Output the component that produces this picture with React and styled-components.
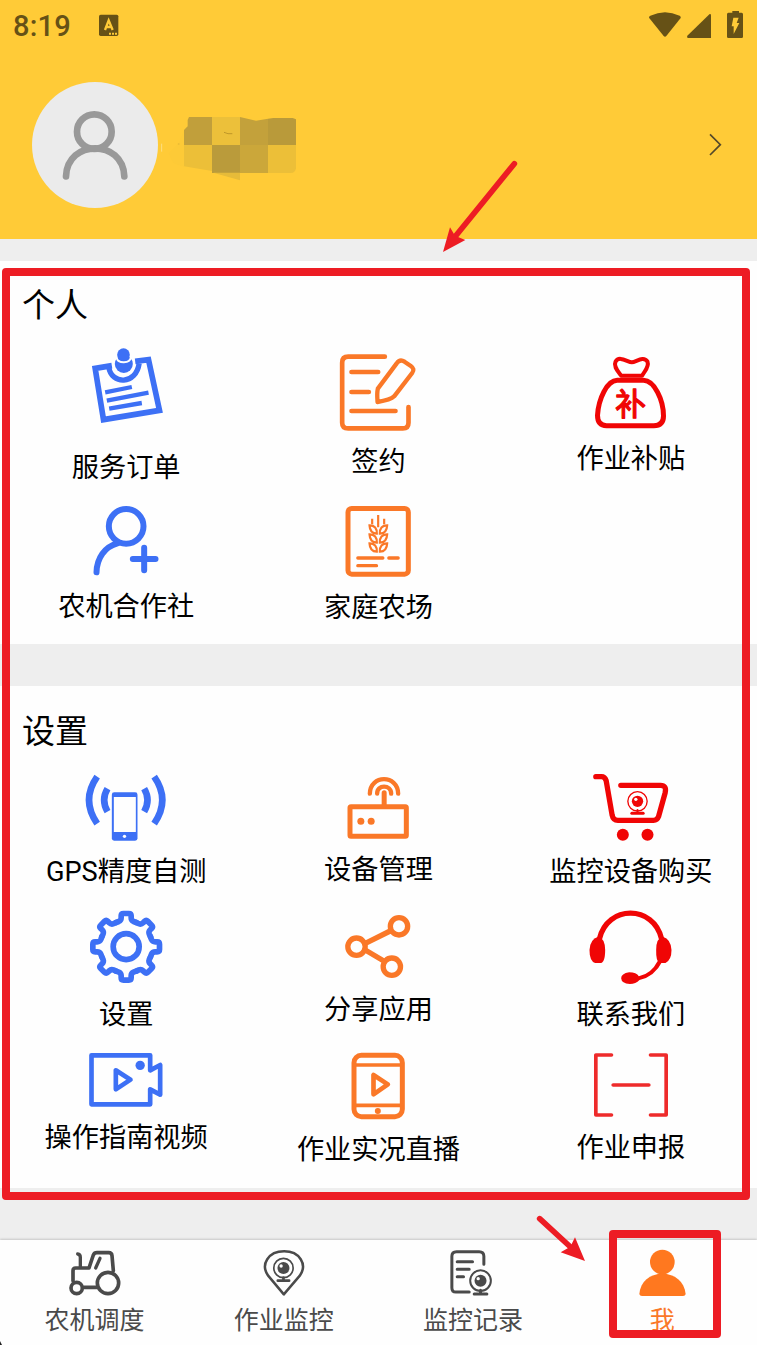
import React from "react";
import styled, { createGlobalStyle } from "styled-components";

const BLUE = "#3d70f5";
const ORANGE = "#fa7828";
const RED = "#f00505";
const MARK = "#ed1c24";
const GREY = "#4a4a4a";

const GlobalStyle = createGlobalStyle`
  body {
    margin: 0;
    background: #eeeeee;
    font-family: Roboto, "Noto Sans CJK SC", sans-serif;
  }
`;

const Page = styled.div`
  position: relative;
  display: flex;
  flex-direction: column;
  width: 757px;
  height: 1345px;
  overflow: hidden;
  background: #eeeeee;
`;

const Header = styled.header`
  height: 239px;
  background: #ffcb37;
`;

const StatusBar = styled.div`
  display: flex;
  align-items: center;
  height: 52px;
  padding: 0 12px 0 13px;
`;

const Time = styled.span`
  width: 85px;
  font-size: 29px;
  font-weight: 500;
  line-height: 52px;
  letter-spacing: 0.2px;
  color: #665116;
`;

const StatusIcons = styled.svg`
  margin-left: auto;
`;

const Profile = styled.div`
  display: flex;
  align-items: center;
  height: 186px;
  padding: 0 27px 0 32px;
`;

const Avatar = styled.div`
  width: 126px;
  height: 126px;
  border-radius: 50%;
  background: #ebebeb;
`;

const Chevron = styled.svg`
  margin-left: auto;
`;

const Section = styled.section`
  height: ${(props) => props.$height}px;
  margin-top: ${(props) => props.$gap}px;
  background: #fefefe;
`;

const Title = styled.h2`
  margin: 0;
  padding: ${(props) => props.$top}px 0 0 22px;
  height: ${(props) => props.$height}px;
  box-sizing: border-box;
  font-size: 33px;
  font-weight: 400;
  line-height: 48px;
  color: #000;
`;

const Grid = styled.div`
  display: grid;
  grid-template-columns: repeat(3, 1fr);
  grid-template-rows: ${(props) => props.$rows};
`;

const Tile = styled.div`
  display: flex;
  flex-direction: column;
  align-items: center;
`;

const Drawing = styled.svg`
  display: block;
  flex: none;
  fill: none;
  stroke-linecap: round;
  stroke-linejoin: round;
`;

const Label = styled.span`
  padding-top: 1px;
  font-size: 27.2px;
  line-height: 36px;
  white-space: nowrap;
  color: #000;
`;

const TabBar = styled.nav`
  display: grid;
  grid-template-columns: repeat(4, 1fr);
  height: 105px;
  margin-top: auto;
  background: #fefefe;
  box-shadow: 0 -1px 2px rgba(0, 0, 0, 0.16);
`;

const Tab = styled.div`
  display: flex;
  flex-direction: column;
  align-items: center;
  padding-top: 6px;
  font-size: 25px;
  line-height: 42px;
  white-space: nowrap;
  color: ${(props) => (props.$active ? ORANGE : GREY)};
`;

const Frame = styled.div`
  position: absolute;
  left: ${(props) => props.$x}px;
  top: ${(props) => props.$y}px;
  width: ${(props) => props.$w}px;
  height: ${(props) => props.$h}px;
  box-sizing: border-box;
  border: 8px solid ${MARK};
  border-radius: 4px;
`;

const Arrow = styled.svg`
  position: absolute;
  left: ${(props) => props.$x}px;
  top: ${(props) => props.$y}px;
`;

const Corner = styled.svg`
  position: absolute;
  left: 0;
  bottom: 0;
`;

// every drawing uses three units per pixel
const Icon = ({ x, y, h, w = 84, color, width = 14, children }) => (
  <Drawing
    width={w}
    height={h}
    viewBox={`${x} ${y} ${w * 3} ${h * 3}`}
    stroke={color}
    strokeWidth={width}
  >
    {children}
  </Drawing>
);

const OrderIcon = () => (
  <Icon x={252.5} y={240} h={109} color={BLUE} width={17}>
    <g strokeLinecap="butt" strokeLinejoin="miter">
      <path d="M336 317L286 325L311 479L479 451L446 299L406 304" />
      <path d="M327 322C335 375 409 375 418 310" strokeWidth="16" />
      <path d="M316 397L396 381M321 422L446 398M328 446L426 429" strokeWidth="13" />
    </g>
    <circle cx="372" cy="312" r="27" fill={BLUE} stroke="none" />
    <path d="M351 295C355 311 390 311 393 293" stroke="#fefefe" strokeWidth="6" />
    <circle cx="371" cy="284" r="19" fill={BLUE} stroke="none" />
  </Icon>
);

const SignIcon = () => (
  <Icon x={259.5} y={0} h={103} color={ORANGE} width={14}>
    <path d="M406 50H296Q278 50 278 68V248Q278 265 296 265H460Q477 265 477 248V201" />
    <path d="M306 96H386M306 156H358M306 213H438" />
    <path
      d="M384 184Q382 158 385 146L441 71Q451 56 465 65L484 78Q497 87 488 99L434 169Q423 180 384 186Z"
      strokeWidth="13"
    />
  </Icon>
);

const SubsidyIcon = () => (
  <Icon x={245.5} y={0} h={100} color={RED}>
    <path
      d="M342 107C333 94 318 80 325 65C336 45 362 67 374 67C386 67 409 46 421 65C427 82 411 94 405 107Z"
      strokeWidth="12"
    />
    <path
      d="M330 121H409C442 122 469 180 469 228Q469 257 440 257H298Q271 257 271 226C274 177 299 122 330 121Z"
      strokeWidth="15"
    />
    <text
      x="370"
      y="225"
      textAnchor="middle"
      fontSize="92"
      fontFamily="Noto Sans CJK SC, sans-serif"
      fill={RED}
      strokeWidth="4"
    >
      补
    </text>
  </Icon>
);

const CoopIcon = () => (
  <Icon x={252.5} y={30} h={88} color={BLUE} width={18}>
    <circle cx="379" cy="109" r="52" />
    <path d="M353 160C315 170 291 204 290 247" />
    <path d="M399 207H467M433 173V241" />
  </Icon>
);

const leaf = "M360 556Q383 556 382 581Q361 580 360 556Z";

const FarmIcon = () => (
  <Icon x={259.5} y={480} h={89} color={ORANGE} width={15}>
    <rect x="295.5" y="505.5" width="181" height="197" rx="11" />
    <g strokeLinecap="butt" strokeLinejoin="miter" strokeWidth="6.5">
      <path d="M386 525V562M368 536V553M404 536V553" />
      {[0, 27, 54].map((dy) => (
        <g key={dy} transform={`translate(0 ${dy})`}>
          <path d={leaf} />
          <path d={leaf} transform="translate(773 0) scale(-1 1)" />
        </g>
      ))}
    </g>
    <path d="M325 654H400M418 654H446M325 677H381" strokeWidth="10" />
  </Icon>
);

const GpsIcon = () => (
  <Icon x={252.5} y={30} h={83} color={BLUE} width={20}>
    <g strokeLinecap="butt">
      <path d="M292 50Q243 120 292 191M323 86Q303 120 323 155" />
      <path d="M463 50Q512 120 463 191M433 86Q453 120 433 155" />
    </g>
    <rect x="336" y="97" width="77" height="145" rx="7" fill={BLUE} stroke="none" />
    <path d="M342 111H408V216H342Z" fill="#fefefe" stroke="none" />
    <circle cx="374" cy="229" r="5" fill="#fefefe" stroke="none" />
  </Icon>
);

const RouterIcon = () => (
  <Icon x={259.5} y={30} h={81} color={ORANGE} width={15}>
    <rect x="301.5" y="140" width="169" height="89" rx="3" />
    <path d="M404 98V136" />
    <path d="M383 101C382 73 425 73 425 101" strokeWidth="13" />
    <path d="M361 101C362 43 445 43 446 101" strokeWidth="13" />
    <circle cx="334" cy="184" r="10.5" fill={ORANGE} stroke="none" />
    <circle cx="365" cy="184" r="10.5" fill={ORANGE} stroke="none" />
  </Icon>
);

const CartIcon = () => (
  <Icon x={245.5} y={30} h={83} color={RED} width={16}>
    <path d="M266 50H283Q293 50 297 62L315 166Q318 181 332 181H439Q450 181 454 170L474 98Q479 76 460 76H341" />
    <circle cx="391" cy="124" r="29" strokeWidth="4" />
    <circle cx="391" cy="124" r="17" fill={RED} stroke="none" />
    <circle cx="386" cy="118" r="5" fill="#fefefe" stroke="none" />
    <path d="M391 150V158" strokeWidth="6" />
    <path d="M374 160H408" strokeWidth="9" />
    <circle cx="347" cy="224" r="18" fill={RED} stroke="none" />
    <circle cx="421" cy="224" r="18" fill={RED} stroke="none" />
  </Icon>
);

const GearIcon = () => (
  <Icon x={252.5} y={438} h={90} color={BLUE} width={17}>
    <circle cx="379" cy="560" r="39" />
    {[0, 45, 90, 135, 180, 225, 270, 315].map((a) => (
      <path
        key={a}
        transform={`translate(379 560.5) rotate(${a})`}
        d="M-30.2 -73L-22 -76Q-15 -79 -15 -87V-93Q-15 -100 -8 -100H8Q15 -100 15 -93V-87Q15 -79 22 -76L30.2 -73"
      />
    ))}
  </Icon>
);

const ShareIcon = () => (
  <Icon x={259.5} y={438} h={85} color={ORANGE} width={16}>
    <circle cx="321" cy="560" r="26" />
    <circle cx="448.5" cy="499" r="26" />
    <circle cx="427" cy="620" r="26" />
    <path d="M346 551L422 513M346 569L403 603" />
  </Icon>
);

const HeadsetIcon = () => (
  <Icon x={245.5} y={438} h={90} color={RED} width={16}>
    <path d="M277 536C300 434 440 434 463 536" />
    <g fill={RED} stroke="none">
      <path d="M273 530Q293 534 294 569Q294 609 279 609H264Q247 604 247 570Q248 538 273 530Z" />
      <path d="M467 530Q492 538 493 570Q493 600 475 609H458Q446 606 447 569Q447 534 467 530Z" />
      <path d="M451 604Q432 642 395 649Q388 637 366 637Q342 641 342 655Q343 671 368 672Q386 672 397 660Q443 649 465 605Z" />
    </g>
  </Icon>
);

const VideoIcon = () => (
  <Icon x={252.5} y={54} h={71} color={BLUE} width={14}>
    <path d="M275 76H451V121L481 105V194L451 178V223H275Z" />
    <path d="M348 121V178L392 149Z" />
    <circle cx="421" cy="106" r="14" fill={BLUE} stroke="none" />
  </Icon>
);

const LiveIcon = () => (
  <Icon x={139.5} y={54} h={83} color={ORANGE} width={15}>
    <rect x="193.5" y="76" width="145" height="184" rx="22" />
    <path d="M193 105H338M193 226H338" strokeWidth="11" />
    <path d="M252 135V193L295 163Z" strokeWidth="14" />
    <circle cx="265" cy="243" r="9" fill={ORANGE} stroke="none" />
  </Icon>
);

const ReportIcon = () => (
  <Icon x={245.5} y={54} h={81} color="#ee2b2b" width={11}>
    <path d="M313 75H266V255H313M430 75H477V255H430M318 165H425" />
  </Icon>
);

const TractorIcon = () => (
  <Icon x={194} y={648} w={60} h={54} color={GREY} width={11}>
    <circle cx="323" cy="759" r="32" />
    <circle cx="229" cy="774" r="17" />
    <path d="M251 772H289M218 752V722Q218 714 226 714H266L279 675Q282 668 290 668H325Q334 668 335 677L339 722" />
    <path d="M232 672Q240 673 240 682V710M299 685L286 714" strokeWidth="10" />
  </Icon>
);

const PinIcon = () => (
  <Icon x={761.6} y={648} w={60} h={54} color={GREY} width={7.5}>
    <path d="M851 793L804 737C780 703 805 664 852 664C898 664 923 703 899 737Z" />
    <circle cx="850" cy="714" r="29" strokeWidth="5" />
    <circle cx="850" cy="714" r="18" fill={GREY} stroke="none" />
    <circle cx="843" cy="708" r="5" fill="#fefefe" stroke="none" />
    <path d="M850 743V750M833 752H867" strokeWidth="8" />
  </Icon>
);

const RecordIcon = () => (
  <Icon x={459.4} y={648} w={60} h={54} color={GREY} width={9}>
    <path d="M538 786H498Q486 786 486 773V679Q486 665 500 665H568Q582 665 582 679V703" />
    <path d="M502 695H548M502 718H538M502 740H521" />
    <circle cx="572" cy="752" r="31" strokeWidth="6" />
    <circle cx="572" cy="752" r="18" fill={GREY} stroke="none" />
    <circle cx="565" cy="746" r="5" fill="#fefefe" stroke="none" />
    <path d="M572 781V791M553 792H591" strokeWidth="9" />
  </Icon>
);

const MeIcon = () => (
  <Icon x={376} y={648} w={60} h={54} color="none">
    <g fill="#ff781f">
      <circle cx="467" cy="696" r="37" />
      <path d="M398 792C401 754 430 731 467 731C504 731 533 754 537 792Q536 798 529 798H406Q399 798 398 792Z" />
    </g>
  </Icon>
);

const personal = [
  { name: "服务订单", icon: OrderIcon },
  { name: "签约", icon: SignIcon },
  { name: "作业补贴", icon: SubsidyIcon },
  { name: "农机合作社", icon: CoopIcon },
  { name: "家庭农场", icon: FarmIcon },
];

const settings = [
  { name: "GPS精度自测", icon: GpsIcon },
  { name: "设备管理", icon: RouterIcon },
  { name: "监控设备购买", icon: CartIcon },
  { name: "设置", icon: GearIcon },
  { name: "分享应用", icon: ShareIcon },
  { name: "联系我们", icon: HeadsetIcon },
  { name: "操作指南视频", icon: VideoIcon },
  { name: "作业实况直播", icon: LiveIcon },
  { name: "作业申报", icon: ReportIcon },
];

const tabs = [
  { name: "农机调度", icon: TractorIcon },
  { name: "作业监控", icon: PinIcon },
  { name: "监控记录", icon: RecordIcon },
  { name: "我", icon: MeIcon, active: true },
];

const Tiles = ({ items, rows }) => (
  <Grid $rows={rows}>
    {items.map((item) => (
      <Tile key={item.name}>
        <item.icon />
        <Label>{item.name}</Label>
      </Tile>
    ))}
  </Grid>
);

const App = () => {
  return (
    <>
      <GlobalStyle />
      <Page>
        <Header>
          <StatusBar>
            <Time>8:19</Time>
            <svg width="22" height="24" viewBox="294 42 66 72">
              <rect x="297" y="44" width="58" height="64" rx="5" fill="#665116" />
              <path
                d="M315 90L326 61L338 90M319 81H334"
                fill="none"
                stroke="#ffcb37"
                strokeWidth="7"
              />
              <path d="M327 98h6v6h-6zM336 98h6v6h-6zM345 98h6v6h-6z" fill="#ffcb37" />
            </svg>
            <StatusIcons width="100" height="30" viewBox="645 33 300 90" fill="#665116">
              <path d="M657 53Q657 49 661 47Q705 26 749 47Q753 49 752 54L709 108Q705 112 701 108Z" />
              <path d="M839 42Q843 41 843 46V114H774Q769 112 772 107Z" />
              <path d="M907 33H927V38H935Q939 39 939 43V110Q939 114 935 114H895Q891 114 891 110V43Q891 39 895 38H907Z" />
              <path d="M910 53H926L920 69H928L911 102V79H905Z" fill="#ffcb37" />
            </StatusIcons>
          </StatusBar>
          <Profile>
            <Avatar>
              <svg width="126" height="126" viewBox="96 246 378 378">
                <g fill="none" stroke="#999" strokeWidth="20" strokeLinecap="round">
                  <circle cx="283" cy="395" r="52" />
                  <path d="M198 529C202 417 369 417 373 529" />
                </g>
              </svg>
            </Avatar>
            <svg width="150" height="126" viewBox="474 246 450 378">
              <path d="M485 431V455" stroke="#fbe7a8" strokeWidth="2" />
              <path d="M552 390L536 430L506 460L520 490L552 501Z" fill="#fdca37" />
              <path d="M567 351H636V435H552V390L563 379V360Z" fill="#c19f3b" />
              <path d="M636 351H720V435H636Z" fill="#ecc03a" />
              <path d="M720 351L768 362L804 356V435H720Z" fill="#c3a13b" />
              <path d="M804 356L820 354H878L888 358V435H804Z" fill="#b99a3a" />
              <path d="M552 435H636V513L552 499Z" fill="#ecbf38" />
              <path d="M636 435H720V519H636Z" fill="#ba9b3b" />
              <path d="M720 435H804V519H720Z" fill="#cba73a" />
              <path d="M804 435H888V505Q886 519 872 519H804Z" fill="#ecbf38" />
              <path d="M640 518H720V541Z" fill="#e6bb39" />
              <path d="M672 397L684 401L697 401" fill="none" stroke="#a98420" strokeWidth="2" />
              <circle cx="536" cy="432" r="3" fill="#edbd36" />
            </svg>
            <Chevron width="30" height="30" viewBox="810 390 90 90">
              <path
                d="M840 403L871 434L840 465"
                fill="none"
                stroke="#54492a"
                strokeWidth="5"
              />
            </Chevron>
          </Profile>
        </Header>

        <Section $gap={22} $height={383}>
          <Title $top={21} $height={79}>
            个人
          </Title>
          <Tiles items={personal} rows="160px 144px" />
        </Section>

        <Section $gap={42} $height={502}>
          <Title $top={22} $height={84}>
            设置
          </Title>
          <Tiles items={settings} rows="136px 142px 140px" />
        </Section>

        <TabBar>
          {tabs.map((tab) => (
            <Tab key={tab.name} $active={tab.active}>
              <tab.icon />
              {tab.name}
            </Tab>
          ))}
        </TabBar>

        <Frame $x={2} $y={268} $w={748} $h={932} />
        <Frame $x={609} $y={1230} $w={112} $h={108} />
        <Arrow $x={430} $y={150} width="100" height="110" viewBox="0 450 300 330">
          <path d="M253 491L72 714" stroke={MARK} strokeWidth="17" strokeLinecap="round" />
          <path d="M39 756L60 682L75 707L106 720Z" fill={MARK} />
        </Arrow>
        <Arrow $x={530} $y={1210} width="60" height="56" viewBox="69 540 180 168">
          <path d="M98 566L197 657" stroke={MARK} strokeWidth="17" strokeLinecap="round" />
          <path d="M234 693L204 622L190 650L161 667Z" fill={MARK} />
        </Arrow>
        <Corner width="3" height="4" viewBox="0 0 3 4">
          <path d="M0 0L1 2L2 4H0Z" fill="#222" />
        </Corner>
      </Page>
    </>
  );
};

export default App;
